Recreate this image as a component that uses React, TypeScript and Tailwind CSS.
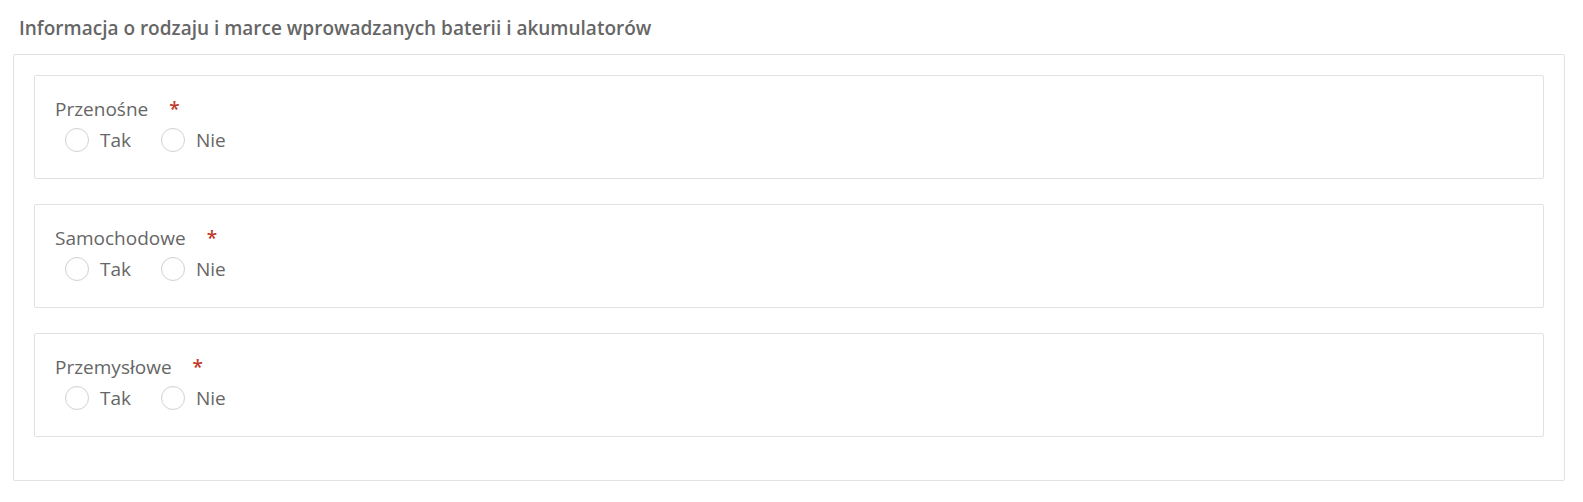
import React from "react";

const Radio = ({ label }: { label: string }) => (
  <label className="flex items-center">
    <span className="w-[24px] h-[24px] rounded-full border border-[#d4d0cc] bg-white shrink-0" />
    <span className="ml-[11px]">{label}</span>
  </label>
);

const Card = ({ title }: { title: string }) => (
  <div className="border border-[#e2e2e2] rounded-[2px] bg-white pt-[20px] pb-[26px] pl-[20px] mb-[25px]">
    <div className="flex items-center leading-[26px]">
      <span>{title}</span>
      <span className="ml-[21px] text-[#c0392b] font-semibold">*</span>
    </div>
    <div className="flex items-center ml-[10px] mt-[6px] leading-[24px]">
      <Radio label="Tak" />
      <div className="ml-[30px]">
        <Radio label="Nie" />
      </div>
    </div>
  </div>
);

export default function App() {
  return (
    <div
      className="w-[1583px] h-[502px] bg-white text-[#666666] text-[19px]"
      style={{ fontFamily: '"Open Sans", sans-serif' }}
    >
      <div className="pt-[16px] pl-[13px] pr-[18px]">
        <h2 className="pl-[6px] font-semibold text-[19px] leading-[25px] text-[#666666]">
          Informacja o rodzaju i marce wprowadzanych baterii i akumulatorów
        </h2>
        <div className="mt-[13px] border border-[#e2e2e2] rounded-[2px] px-[20px] pt-[20px] pb-[18px]">
          <Card title="Przenośne" />
          <Card title="Samochodowe" />
          <Card title="Przemysłowe" />
        </div>
      </div>
    </div>
  );
}
